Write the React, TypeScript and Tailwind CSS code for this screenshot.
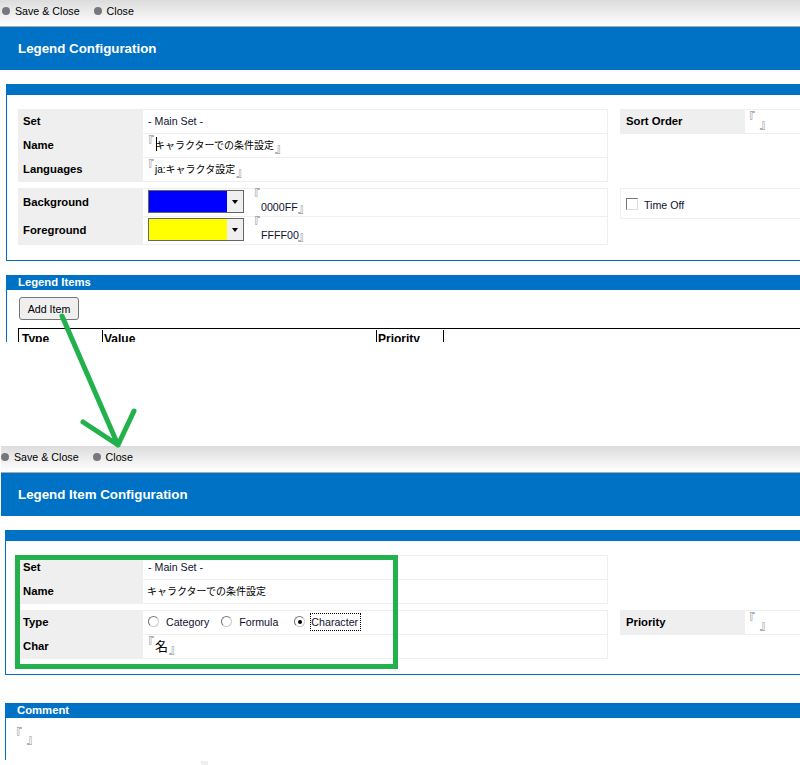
import type { ReactNode } from 'react'

const FONT = "font-['Liberation_Sans','Noto_Sans_CJK_JP',sans-serif]"
const BLUE = 'bg-[#0072c6]'

function Toolbar({ inset }: { inset?: boolean }) {
  return (
    <div
      className={`h-[27px] shrink-0 border-b border-[#aaaaaa] bg-gradient-to-b from-[#dcdcdc] to-white flex items-center pb-[4px] text-[10.67px] text-black ${inset ? 'pl-0' : 'pl-[2px]'}`}
    >
      <span className="size-2 rounded-full bg-[#77777d]" />
      <span className="ml-[5px]">Save &amp; Close</span>
      <span className="size-2 rounded-full bg-[#77777d] ml-[14px]" />
      <span className="ml-[5px]">Close</span>
    </div>
  )
}

function PageTitle({ children, inset }: { children: ReactNode; inset?: boolean }) {
  return (
    <div
      className={`h-[43px] shrink-0 ${BLUE} flex items-center pt-px text-[13.33px] font-bold text-white ${inset ? 'pl-[17px]' : 'pl-[18px]'}`}
    >
      {children}
    </div>
  )
}

function Row({ label, h = 24, children }: { label?: string; h?: number; children?: ReactNode }) {
  return (
    <div className={`flex border-b border-[#efefef] ${h === 28 ? 'h-[28px]' : 'h-[24px]'}`}>
      <div className="w-[125px] shrink-0 bg-[#efefef] flex items-center pl-[5px] text-[11.3px] font-bold text-black">
        {label}
      </div>
      <div className="flex-1 relative flex items-center pl-[5px] text-[10.67px] text-[#111133]">{children}</div>
    </div>
  )
}

function Grid({ rows }: { rows: ReactNode }) {
  return <div className="w-[590px] shrink-0 border-t border-r border-[#efefef]">{rows}</div>
}

function Quoted({ children, big }: { children?: ReactNode; big?: boolean }) {
  return (
    <span className={`flex items-center text-black ${big ? 'text-[13px]' : 'text-[10px]'}`}>
      <span className="text-[#777777] text-[12px] -mt-[7px] -ml-[6px] mr-[1px]">『</span>
      {children}
      <span className="text-[#777777] text-[12px] mt-[6px] -mr-[5px] ml-px">』</span>
    </span>
  )
}

function ColorPick({ color, value }: { color: string; value: string }) {
  return (
    <div className="flex items-start w-full h-full">
      <div className="mt-[1px] h-[23px] w-[96px] border border-[#666666] flex">
        <div className={`flex-1 ${color === 'blue' ? 'bg-[#0000ff]' : 'bg-[#ffff00]'}`} />
        <div className="w-[16px] bg-[#efefef] flex items-center justify-center">
          <span className="border-x-[3.5px] border-t-[4px] border-x-transparent border-t-black" />
        </div>
      </div>
      <span className="relative ml-[4px] h-full w-[70px] text-[#111133]">
        <span className="absolute left-0 -top-[3px] text-[#777777] text-[12px]">『</span>
        <span className="absolute left-[13px] top-[10px]">{value}</span>
        <span className="absolute left-[50px] top-[11px] text-[#777777] text-[12px]">』</span>
      </span>
    </div>
  )
}

function Radio({ on, children, focus }: { on?: boolean; children: ReactNode; focus?: boolean }) {
  return (
    <span className="flex items-center">
      <span className="size-[11px] rounded-full border border-[#777777] border-r-[#cccccc] border-b-[#cccccc] flex items-center justify-center">
        {on && <span className="size-[4px] rounded-full bg-black" />}
      </span>
      <span
        className={`text-[#111133] ${focus ? 'ml-[5px] pr-[2px] border border-dotted border-black leading-[16px]' : 'ml-[7px]'}`}
      >
        {children}
      </span>
    </span>
  )
}

function SideRow({ label }: { label: string }) {
  return (
    <div className="flex-1 border-t border-b border-[#efefef] h-[25px] flex">
      <div className="w-[125px] shrink-0 bg-[#efefef] flex items-center pl-[6px] text-[11.3px] font-bold text-black">
        {label}
      </div>
      <div className="pl-[4px] flex items-center">
        <Quoted>&nbsp;</Quoted>
      </div>
    </div>
  )
}

function FirstShot() {
  return (
    <section className="h-[342px] shrink-0 overflow-hidden flex flex-col">
      <Toolbar />
      <PageTitle>Legend Configuration</PageTitle>
      <div className="mt-[14px] ml-[6px] h-[177px] shrink-0 border-l border-b border-[#0072c6] overflow-hidden">
        <div className={`h-[11px] ${BLUE}`} />
        <div className="mt-[14px] ml-[11px] flex gap-[12px]">
          <Grid
            rows={
              <>
                <Row label="Set">
                  <span className="-mt-px">- Main Set -</span>
                </Row>
                <Row label="Name">
                  <Quoted>キャラクターでの条件設定</Quoted>
                  <span className="absolute left-[13px] top-[3px] h-[14px] w-px bg-black" />
                </Row>
                <Row label="Languages">
                  <Quoted>ja:キャラクタ設定</Quoted>
                </Row>
              </>
            }
          />
          <SideRow label="Sort Order" />
        </div>
        <div className="mt-[6px] ml-[11px] flex gap-[12px]">
          <Grid
            rows={
              <>
                <Row label="Background" h={28}>
                  <ColorPick color="blue" value="0000FF" />
                </Row>
                <Row label="Foreground" h={28}>
                  <ColorPick color="yellow" value="FFFF00" />
                </Row>
              </>
            }
          />
          <div className="flex-1 h-[31px] border border-r-0 border-[#efefef] flex items-center pl-[5px] text-[10.67px] text-[#111133]">
            <span className="size-[12px] border border-[#777777] border-r-[#dddddd] border-b-[#dddddd]" />
            <span className="ml-[6px] mt-[3px]">Time Off</span>
          </div>
        </div>
      </div>
      <div className="mt-[14px] ml-[6px] border-l border-[#0072c6] flex-1">
        <div className={`h-[15px] ${BLUE} pl-[11px] flex items-center text-[11.3px] font-bold text-white`}>
          Legend Items
        </div>
        <button className="mt-[7px] ml-[12px] h-[23px] w-[60px] rounded-[3px] border border-[#777777] bg-[#efefef] text-[10.67px] text-black block">
          Add Item
        </button>
        <div className="mt-[8px] ml-[11px] h-[30px] border-t border-l border-black pt-px flex text-[12px] font-bold text-black">
          <div className="w-[84px] pl-[3px] border-r border-black">Type</div>
          <div className="w-[274px] pl-[1px] border-r border-black">Value</div>
          <div className="w-[67px] pl-[1px] border-r border-black">Priority</div>
        </div>
      </div>
    </section>
  )
}

function SecondShot() {
  return (
    <section className="mt-[104px] ml-px flex-1 flex flex-col overflow-hidden">
      <Toolbar inset />
      <PageTitle inset>Legend Item Configuration</PageTitle>
      <div className="mt-[14px] ml-[4px] h-[145px] shrink-0 border-l border-b border-[#0072c6] overflow-hidden">
        <div className={`h-[11px] ${BLUE}`} />
        <div className="mt-[14px] ml-[12px] flex gap-[12px]">
          <Grid
            rows={
              <>
                <Row label="Set">
                  <span className="-mt-px">- Main Set -</span>
                </Row>
                <Row label="Name">
                  <span className="-ml-px text-[10px] text-black">キャラクターでの条件設定</span>
                </Row>
              </>
            }
          />
        </div>
        <div className="mt-[6px] ml-[12px] flex gap-[12px]">
          <Grid
            rows={
              <>
                <Row label="Type">
                  <div className="flex items-center -mt-[2px]">
                    <Radio>Category</Radio>
                    <span className="w-[12px]" />
                    <Radio>Formula</Radio>
                    <span className="w-[16px]" />
                    <Radio on focus>
                      Character
                    </Radio>
                  </div>
                </Row>
                <Row label="Char">
                  <Quoted big>名</Quoted>
                </Row>
              </>
            }
          />
          <SideRow label="Priority" />
        </div>
      </div>
      <div className="mt-[28px] ml-[4px] h-[57px] shrink-0 border-l border-[#0072c6]">
        <div className={`h-[15px] ${BLUE} pl-[11px] flex items-center text-[11.3px] font-bold text-white`}>
          Comment
        </div>
        <div className="mt-[9px] pl-[10px] flex items-center h-[20px]">
          <Quoted>&nbsp;</Quoted>
        </div>
      </div>
      <div className="ml-[200px] mt-px w-[7px] flex-1 bg-[#efefef]" />
    </section>
  )
}

export default function App() {
  return (
    <div className={`relative w-[800px] h-[765px] overflow-hidden bg-white flex flex-col ${FONT}`}>
      <FirstShot />
      <SecondShot />
      {/* hand-drawn annotation on top of the two shots */}
      <svg className="absolute left-0 top-0 pointer-events-none" width="800" height="765" fill="none">
        <path
          d="M62 316L118 445M83 422L118 445L134 411"
          stroke="#22b14c"
          strokeWidth="5"
          strokeLinecap="round"
          strokeLinejoin="round"
        />
      </svg>
      <div className="absolute left-[15px] top-[555px] w-[383px] h-[114px] border-[5px] border-[#22b14c]" />
    </div>
  )
}
